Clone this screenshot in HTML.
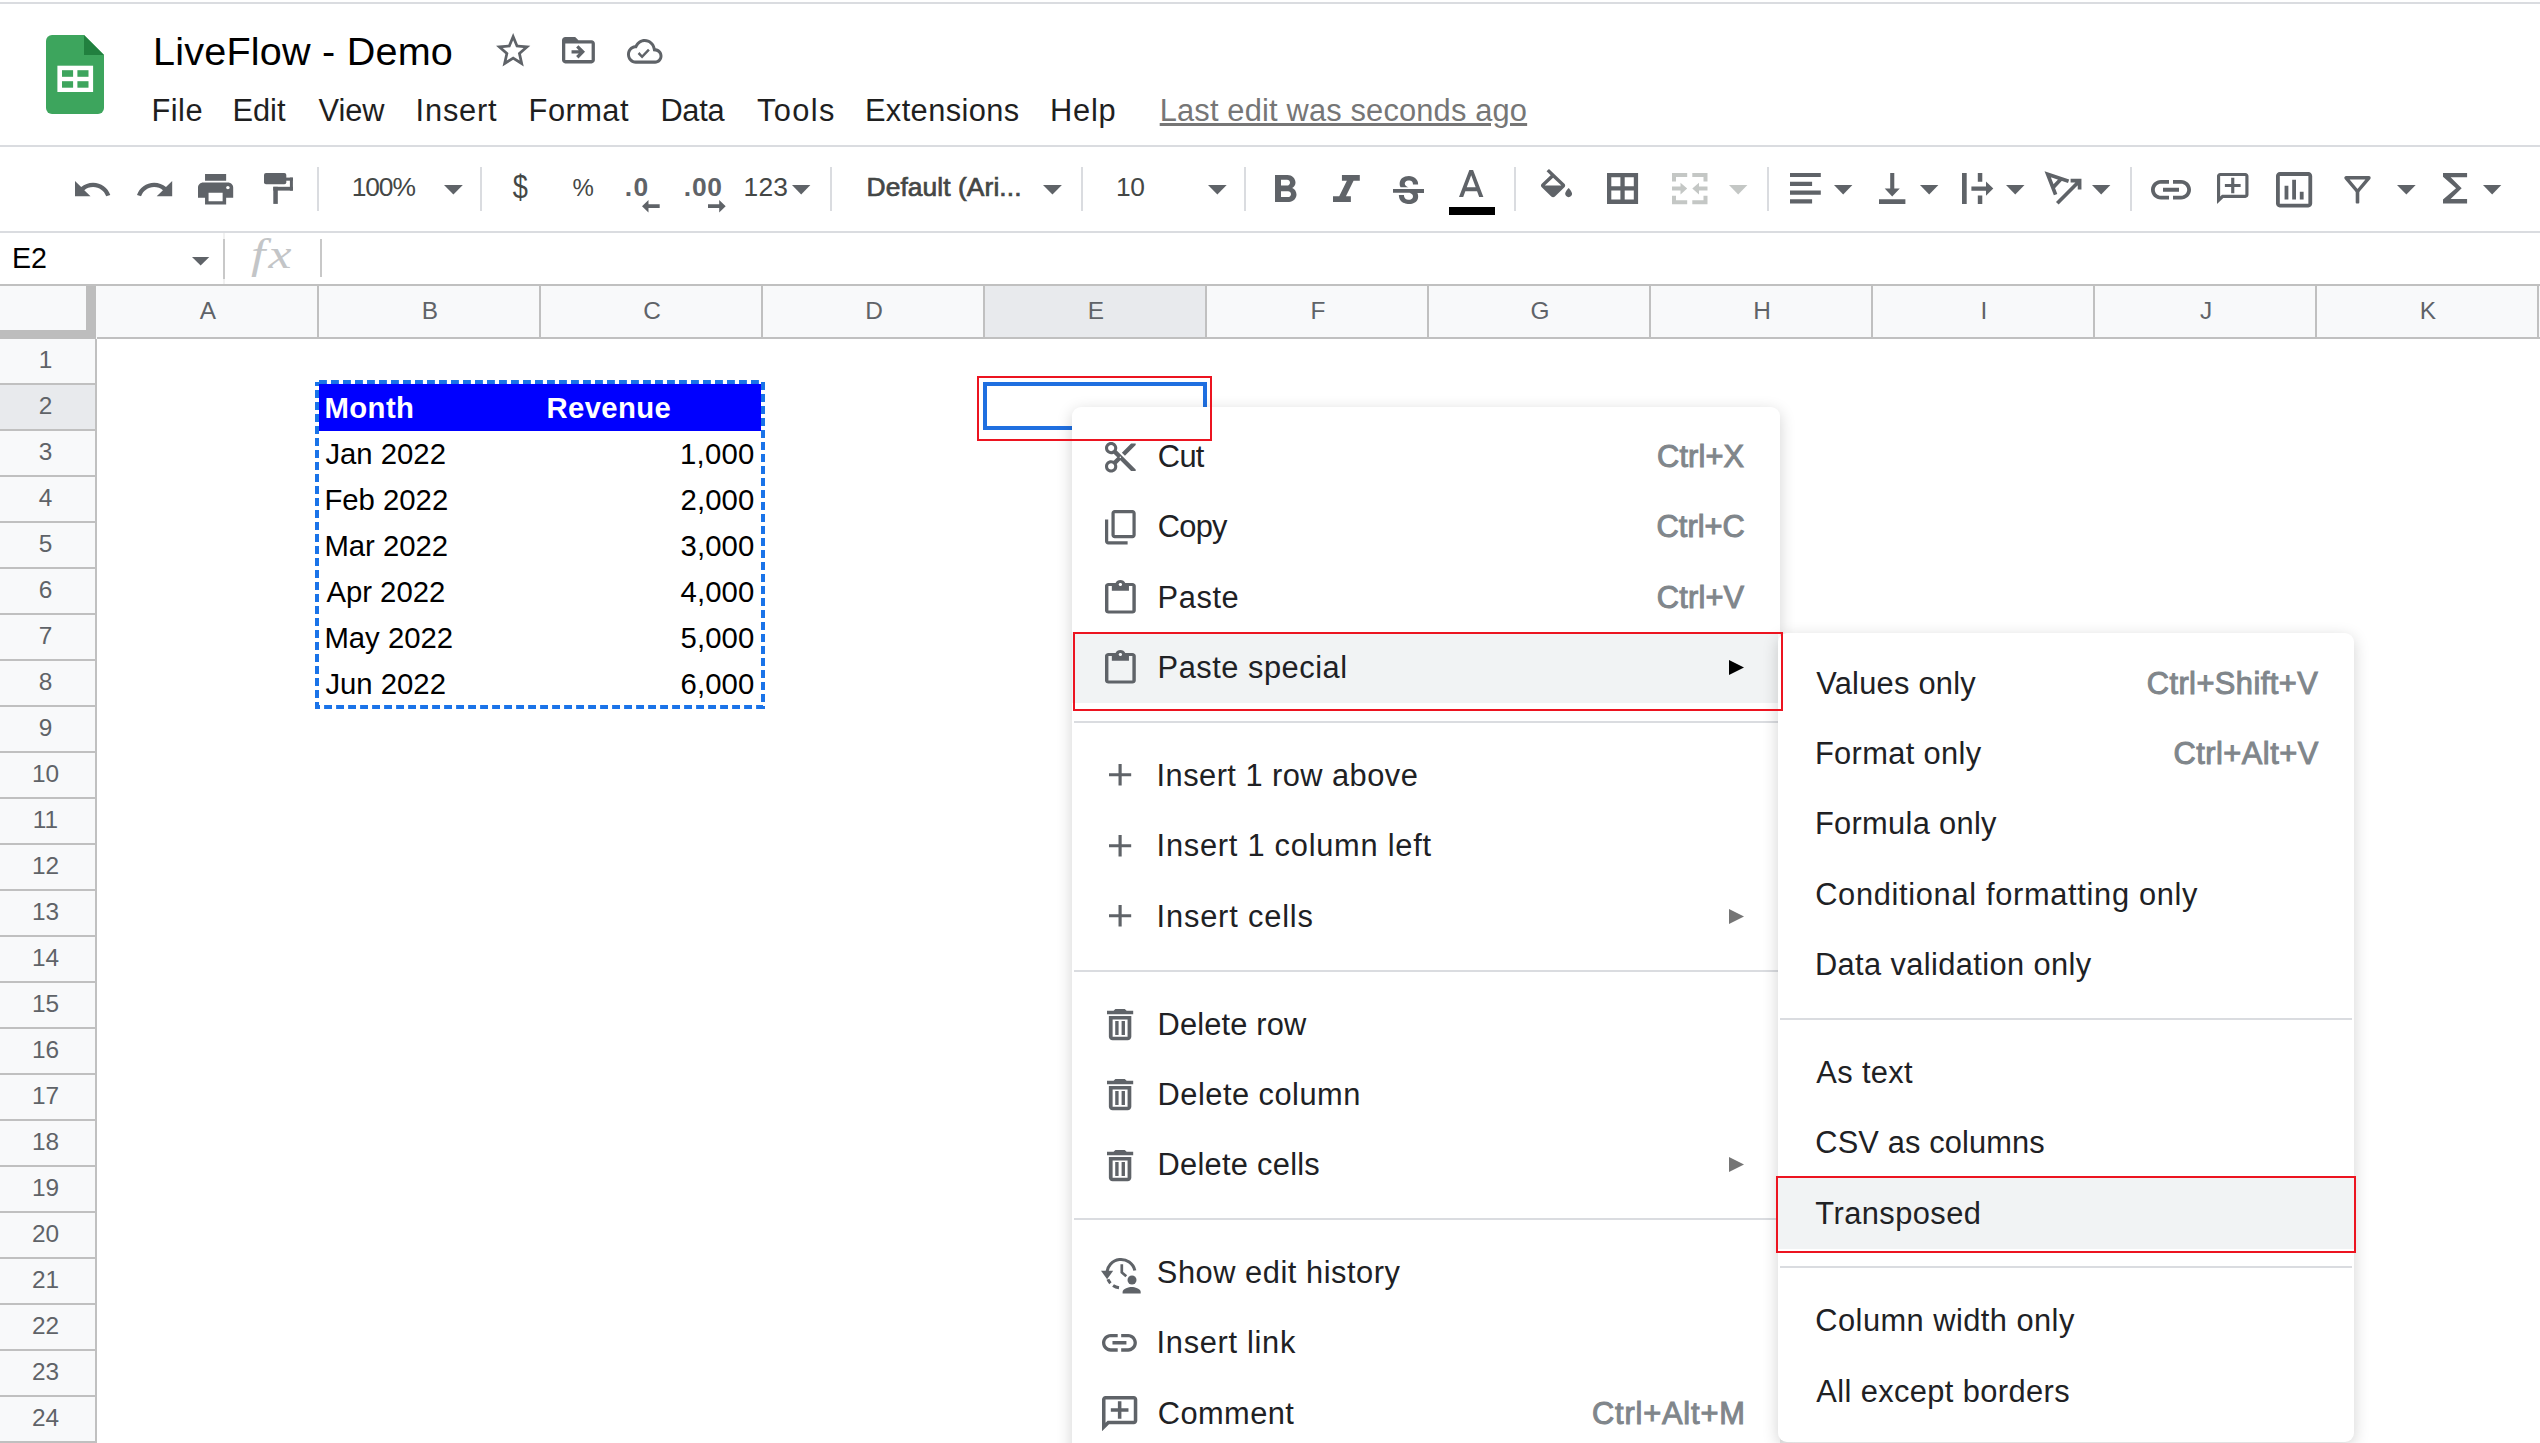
<!DOCTYPE html>
<html lang="en">
<head>
<meta charset="utf-8">
<title>LiveFlow - Demo</title>
<style>
*{box-sizing:border-box;margin:0;padding:0}
html,body{width:2540px;height:1443px;overflow:hidden;background:#fff}
body{position:relative;font-family:"Liberation Sans",sans-serif;color:#202124}
.abs{position:absolute}
.t{position:absolute;white-space:nowrap;line-height:1.15}
svg{position:absolute;overflow:visible}
#topline{left:0;top:2px;width:2540px;height:2px;background:#dadce0}
#hdrline{left:0;top:145px;width:2540px;height:2px;background:#dadce0}
#tbline{left:0;top:231px;width:2540px;height:2px;background:#dadce0}
#lastedit{color:#767676;text-decoration:underline;text-decoration-thickness:2.6px;text-underline-offset:1.800px}
.tsep{position:absolute;top:167px;width:2px;height:44px;background:#dadce0}
.tt{color:#444746}
.ti{color:#5f6368}
.tb{color:#444746;-webkit-text-stroke:0.7px #444746}
#colhdr{left:0;top:284px;width:2540px;height:55px;background:#f8f9fa;border-top:2px solid #c0c0c0;border-bottom:2px solid #c0c0c0}
.ch{position:absolute;top:286px;height:51px;width:222px;border-right:2px solid #c0c0c0;font-size:24.4px;color:#5f6368;text-align:center;line-height:50px;padding-left:2px}
.ch.sel,.rh.sel{background:#e8eaed}
#rowhdr{left:0;top:339px;width:97px;height:1104px;background:#f8f9fa;border-right:2px solid #c0c0c0}
.rh{position:absolute;left:0;width:95px;height:46px;border-bottom:2px solid #c0c0c0;font-size:24.4px;color:#5f6368;text-align:center;line-height:41.500px;padding-right:4px}
#corner{left:0;top:286px;width:97px;height:53px;background:#f8f9fa}
#cornerv{left:86px;top:286px;width:10px;height:53px;background:#bdbdbd}
#cornerh{left:0;top:330px;width:96px;height:9px;background:#bdbdbd}
.cell{position:absolute;font-size:29.3px;color:#000;line-height:46px;height:46px;white-space:nowrap}
.hb{color:#fff;font-weight:bold}
.num{text-align:right}
.menubox{position:absolute;background:#fff;border-radius:9px;box-shadow:0 4px 16px 0 rgba(0,0,0,.18)}
.mi{position:absolute;left:0;height:70.4px;width:100%}
.sc{color:#80868b;-webkit-text-stroke:1px #80868b}
.msep{position:absolute;left:0;width:100%;height:2px;background:#dadce0}
.hl{background:#f1f3f4}
.red{position:absolute;border:2px solid #ec1420}

</style>
</head>
<body>
<div class="abs" id="topline"></div>
<svg style="left:46.400px;top:35px" width="58" height="79" viewBox="0 0 58 79">
<path d="M6 0H38L58 20V73a6 6 0 0 1-6 6H6a6 6 0 0 1-6-6V6a6 6 0 0 1 6-6z" fill="#3da55d"/>
<path d="M38 0L58 20H38z" fill="#21803f"/>
<rect x="11.4" y="30.7" width="35.7" height="26.3" fill="#fff"/>
<rect x="16" y="35.2" width="11.1" height="6.6" fill="#3da55d"/><rect x="31.4" y="35.2" width="11.1" height="6.6" fill="#3da55d"/>
<rect x="16" y="46.2" width="11.1" height="6.5" fill="#3da55d"/><rect x="31.4" y="46.2" width="11.1" height="6.5" fill="#3da55d"/>
</svg>
<div class="t " id="title" style="left:153.0px;top:28.5px;font-size:39.6px;letter-spacing:0.21px;color:#000;">LiveFlow - Demo</div>
<svg style="left:495.6px;top:33.2px" width="34.3" height="33.4" viewBox="2.000 2.000 20.000 19.000" preserveAspectRatio="none"><path fill="#5f6368" d="M22 9.240l-7.190-.62L12 2 9.190 8.630 2 9.240l5.460 4.730L5.820 21 12 17.270 18.180 21l-1.630-7.030L22 9.240zM12 15.400l-3.760 2.270 1-4.280-3.320-2.880 4.380-.38L12 6.100l1.710 4.040 4.380.38-3.320 2.880 1 4.280L12 15.400z"/></svg>
<svg style="left:561.8px;top:36.6px" width="32.9" height="26.4" viewBox="2.000 4.000 20.000 16.000" preserveAspectRatio="none"><path fill="#5f6368" d="M20 6h-8l-2-2H4c-1.100 0-2 .9-2 2v12c0 1.100.9 2 2 2h16c1.100 0 2-.9 2-2V8c0-1.100-.9-2-2-2zm0 12H4V8h16v10zM12 17l-1.410-1.410L12.170 14H7.800v-2h4.370l-1.580-1.590L12 9l4 4z"/></svg>
<svg style="left:627.2px;top:38.6px" width="35.5" height="24.7" viewBox="0.000 4.000 24.000 16.000" preserveAspectRatio="none"><path fill="#5f6368" d="M19.350 10.040C18.670 6.590 15.640 4 12 4 9.110 4 6.600 5.640 5.350 8.040 2.340 8.360 0 10.910 0 14c0 3.310 2.690 6 6 6h13c2.760 0 5-2.240 5-5 0-2.640-2.050-4.780-4.650-4.960zM19 18H6c-2.210 0-4-1.790-4-4 0-2.050 1.530-3.760 3.560-3.970l1.070-.11.5-.95C8.080 7.140 9.940 6 12 6c2.620 0 4.880 1.860 5.390 4.430l.3 1.500 1.530.11c1.560.1 2.780 1.410 2.780 2.960 0 1.650-1.350 3-3 3zM10.200 14.300l-1.800-1.800-1.200 1.200 3 3 5.200-5.200-1.200-1.200z"/></svg>
<div class="t " id="m1" style="left:151.6px;top:93.1px;font-size:30.8px;letter-spacing:0.43px;color:#1f1f1f;">File</div>
<div class="t " id="m2" style="left:232.4px;top:93.1px;font-size:30.8px;color:#1f1f1f;">Edit</div>
<div class="t " id="m3" style="left:318.6px;top:93.1px;font-size:30.8px;letter-spacing:-0.10px;color:#1f1f1f;">View</div>
<div class="t " id="m4" style="left:415.6px;top:93.1px;font-size:30.8px;letter-spacing:0.80px;color:#1f1f1f;">Insert</div>
<div class="t " id="m5" style="left:528.6px;top:93.1px;font-size:30.8px;letter-spacing:0.48px;color:#1f1f1f;">Format</div>
<div class="t " id="m6" style="left:660.4px;top:93.1px;font-size:30.8px;letter-spacing:-0.30px;color:#1f1f1f;">Data</div>
<div class="t " id="m7" style="left:757.0px;top:93.1px;font-size:30.8px;letter-spacing:1.40px;color:#1f1f1f;">Tools</div>
<div class="t " id="m8" style="left:864.9px;top:93.1px;font-size:30.8px;letter-spacing:0.41px;color:#1f1f1f;">Extensions</div>
<div class="t " id="m9" style="left:1050.0px;top:93.1px;font-size:30.8px;letter-spacing:0.80px;color:#1f1f1f;">Help</div>
<div class="t " id="lastedit" style="left:1159.7px;top:92.9px;font-size:30.8px;letter-spacing:0.18px;">Last edit was seconds ago</div>
<div class="abs" id="hdrline"></div>
<svg style="left:74.9px;top:180.9px" width="35.3" height="15.3" viewBox="2.000 7.000 20.470 9.000" preserveAspectRatio="none"><path fill="#5f6368" d="M12.5 8c-2.65 0-5.05.99-6.9 2.6L2 7v9h9l-3.62-3.62c1.39-1.16 3.16-1.88 5.12-1.88 3.54 0 6.55 2.31 7.6 5.5l2.37-.78C21.08 11.03 17.15 8 12.5 8z"/></svg>
<svg style="left:137.0px;top:180.9px" width="35.2" height="15.3" viewBox="1.540 7.000 20.460 9.000" preserveAspectRatio="none"><path fill="#5f6368" d="M18.4 10.6C16.55 8.99 14.15 8 11.5 8c-4.65 0-8.58 3.03-9.96 7.22L3.9 16c1.05-3.19 4.05-5.5 7.6-5.5 1.95 0 3.73.72 5.12 1.88L13 16h9V7l-3.6 3.6z"/></svg>
<svg style="left:198.1px;top:174.0px" width="35.2" height="30.6" viewBox="2.000 3.000 20.000 18.000" preserveAspectRatio="none"><path fill="#5f6368" d="M19 8H5c-1.66 0-3 1.34-3 3v6h4v4h12v-4h4v-6c0-1.66-1.34-3-3-3zm-3 11H8v-5h8v5zm3-7c-.55 0-1-.45-1-1s.45-1 1-1 1 .45 1 1-.45 1-1 1zm-1-9H6v4h12V3z"/></svg>
<svg style="left:264px;top:173.200px" width="29" height="31" viewBox="0 0 29 31"><g fill="#5f6368"><rect x="0" y="0" width="22.300" height="11.300" rx="2"/><rect x="22" y="4.600" width="6.900" height="3.100"/><rect x="25.900" y="4.600" width="3" height="13"/><rect x="9.300" y="13.800" width="19.600" height="3.800"/><rect x="9.300" y="13.800" width="4.500" height="17.100"/></g></svg>
<div class="tsep" style="left:317.4px"></div>
<div class="tsep" style="left:480.2px"></div>
<div class="tsep" style="left:830.2px"></div>
<div class="tsep" style="left:1081.2px"></div>
<div class="tsep" style="left:1244.2px"></div>
<div class="tsep" style="left:1514.2px"></div>
<div class="tsep" style="left:1767px"></div>
<div class="tsep" style="left:2129.6px"></div>
<div class="t tt" id="zoom" style="left:351.7px;top:172.0px;font-size:26.4px;letter-spacing:-1.10px;">100%</div>
<svg style="left:444.1px;top:185.0px" width="18.8" height="9.5" viewBox="0 0 18.8 9.5"><path fill="#5f6368" d="M0 0H18.8L9.40 9.5z"/></svg>
<div class="t tt" id="dollar" style="left:513.3px;top:172.0px;font-size:26.4px;transform:scale(1.03,1.23);transform-origin:center 52%;">$</div>
<div class="t tt" id="pct" style="left:572.4px;top:174.2px;font-size:24px;">%</div>
<div class="t tt ti" id="dec0" style="left:624.8px;top:172.3px;font-size:26.4px;letter-spacing:1.40px;font-weight:700;">.0</div>
<svg style="left:642.4px;top:199.7px" width="17.7" height="12.4" viewBox="0 0 17.7 12.4"><path fill="#5f6368" d="M0 6.200L6.500 0V4.300H17.700V8.100H6.500V12.400z"/></svg>
<div class="t tt ti" id="dec00" style="left:683.8px;top:172.3px;font-size:26.4px;letter-spacing:0.75px;font-weight:700;">.00</div>
<svg style="left:708px;top:199.700px" width="17.7" height="12.4" viewBox="0 0 17.7 12.4"><path fill="#5f6368" d="M17.700 6.200L11.200 0V4.300H0V8.100H11.200V12.400z"/></svg>
<div class="t tt" id="n123" style="left:743.5px;top:172.0px;font-size:26.4px;letter-spacing:0.20px;">123</div>
<svg style="left:792.4px;top:185.0px" width="18.4" height="9.5" viewBox="0 0 18.4 9.5"><path fill="#5f6368" d="M0 0H18.4L9.20 9.5z"/></svg>
<div class="t tt tb" id="fontname" style="left:866.5px;top:172.2px;font-size:26.4px;letter-spacing:0.07px;">Default (Ari...</div>
<svg style="left:1043.1px;top:185.0px" width="18.9" height="9.5" viewBox="0 0 18.9 9.5"><path fill="#5f6368" d="M0 0H18.9L9.45 9.5z"/></svg>
<div class="t tt" id="fsize" style="left:1115.9px;top:172.0px;font-size:26.4px;letter-spacing:-0.30px;">10</div>
<svg style="left:1207.5px;top:185.0px" width="18.7" height="9.5" viewBox="0 0 18.7 9.5"><path fill="#5f6368" d="M0 0H18.7L9.35 9.5z"/></svg>
<svg style="left:1274.5px;top:175.2px" width="21.5" height="26.9" viewBox="7.000 4.000 10.750 14.000" preserveAspectRatio="none"><path fill="#5f6368" d="M15.6 10.79c.97-.67 1.65-1.77 1.65-2.79 0-2.26-1.75-4-4-4H7v14h7.04c2.09 0 3.71-1.7 3.71-3.79 0-1.52-.86-2.82-2.15-3.42zM10 6.5h3c.83 0 1.5.67 1.5 1.5s-.67 1.5-1.5 1.5h-3v-3zm3.5 9H10v-3h3.5c.83 0 1.5.67 1.5 1.5s-.67 1.5-1.5 1.5z"/></svg>
<svg style="left:1333.2px;top:175.2px" width="26.8" height="26.9" viewBox="6.000 4.000 12.000 14.000" preserveAspectRatio="none"><path fill="#5f6368" d="M10 4v3h2.21l-3.42 8H6v3h8v-3h-2.21l3.42-8H18V4z"/></svg>
<svg style="left:1393.0px;top:176.2px" width="31.0" height="28.1" viewBox="3.000 3.000 18.000 15.010" preserveAspectRatio="none"><path fill="#5f6368" d="M7.24 8.75c-.26-.48-.39-1.03-.39-1.67 0-.61.13-1.16.4-1.67.26-.5.63-.93 1.11-1.29.48-.35 1.05-.63 1.7-.83.66-.19 1.39-.29 2.18-.29.81 0 1.54.11 2.21.34.66.22 1.23.54 1.69.94.47.4.83.88 1.08 1.43.25.55.38 1.15.38 1.81h-3.01c0-.31-.05-.59-.15-.85-.09-.27-.24-.49-.44-.68-.2-.19-.45-.33-.75-.44-.3-.1-.66-.16-1.06-.16-.39 0-.74.04-1.03.13-.29.09-.53.21-.72.36-.19.16-.34.34-.44.55-.1.21-.15.43-.15.66 0 .48.25.88.74 1.21.38.25.77.48 1.41.7H7.39c-.05-.08-.11-.17-.15-.25zM21 12v-2H3v2h9.62c.18.07.4.14.55.2.37.17.66.34.87.51.21.17.35.36.43.57.07.2.11.43.11.69 0 .23-.05.45-.14.66-.09.2-.23.38-.42.53-.19.15-.42.26-.71.35-.29.08-.63.13-1.01.13-.43 0-.83-.04-1.18-.13s-.66-.23-.91-.42c-.25-.19-.45-.44-.59-.75-.14-.31-.25-.76-.25-1.21H6.4c0 .55.08 1.13.24 1.58.16.45.37.85.65 1.21.28.35.6.66.98.92.37.26.78.48 1.22.65.44.17.9.3 1.38.39.48.08.96.13 1.44.13.8 0 1.53-.09 2.18-.28s1.21-.45 1.67-.79c.46-.34.82-.77 1.07-1.27s.38-1.07.38-1.71c0-.6-.1-1.14-.31-1.61-.05-.11-.11-.23-.17-.33H21z"/></svg>
<svg style="left:1458.7px;top:170.2px" width="24.4" height="27.0" viewBox="5.500 3.000 12.990 14.000" preserveAspectRatio="none"><path fill="#5f6368" d="M11 3L5.5 17h2.25l1.12-3h6.25l1.12 3h2.25L13 3h-2zm-1.38 9L12 5.67 14.38 12H9.62z"/></svg>
<div class="abs" style="left:1449px;top:207px;width:46px;height:8px;background:#000"></div>
<svg style="left:1541.0px;top:169.0px" width="31.1" height="28.2" viewBox="2.997 0.000 18.003 17.000" preserveAspectRatio="none"><path fill="#5f6368" d="M16.56 8.94L7.62 0 6.21 1.41l2.38 2.38-5.15 5.15c-.59.59-.59 1.54 0 2.12l5.5 5.5c.29.29.68.44 1.06.44s.77-.15 1.06-.44l5.5-5.5c.59-.58.59-1.53 0-2.12zM5.21 10L10 5.21 14.79 10H5.21zM19 11.5s-2 2.17-2 3.5c0 1.1.9 2 2 2s2-.9 2-2c0-1.33-2-3.5-2-3.5z"/></svg>
<svg style="left:1607.1px;top:172.9px" width="31.1" height="30.9" viewBox="0 0 31.1 30.9"><path fill="#5f6368" fill-rule="evenodd" d="M0 0H31.1V30.9H0zM4.300 4.300V13.300H13.400V4.300zM17.700 4.300V13.300H26.800V4.300zM4.300 17.600V26.600H13.400V17.600zM17.700 17.600V26.600H26.800V17.600z"/></svg>
<svg style="left:1672px;top:173.200px" width="35.500" height="31.200" viewBox="0 0 35.500 31.200"><path fill="#c4c7c5" d="M0 0H15.200V4H4V8.500H0zM20.300 0H35.500V8.500H31.500V4H20.300zM0 22.700H4V27.200H15.200V31.200H0zM31.500 22.700H35.500V31.200H20.300V27.200H31.500zM0 13.600H8.500V9.800L15.200 15.600L8.500 21.400V17.600H0zM35.500 13.600V17.600H27V21.400L20.300 15.600L27 9.800V13.600z"/></svg>
<svg style="left:1728.6px;top:185.0px" width="18.4" height="9.5" viewBox="0 0 18.4 9.5"><path fill="#c4c7c5" d="M0 0H18.4L9.20 9.5z"/></svg>
<svg style="left:1790.4px;top:173.2px" width="31" height="30.500" viewBox="0 0 31 30.500"><path fill="#5f6368" d="M0 0H30.800V4.100H0zM0 8.800H22.100V12.900H0zM0 17.600H30.800V21.700H0zM0 26.300H22.100V30.400H0z"/></svg>
<svg style="left:1834.2px;top:185.0px" width="18.4" height="9.5" viewBox="0 0 18.4 9.5"><path fill="#5f6368" d="M0 0H18.4L9.20 9.5z"/></svg>
<svg style="left:1878.8px;top:172.600px" width="26.400" height="31" viewBox="0 0 26.400 31"><path fill="#5f6368" d="M11.200 0H15.300V15.400H20.800L13.200 23.400L5.700 15.400H11.200zM0 26.300H26.400V30.900H0z"/></svg>
<svg style="left:1920.0px;top:185.0px" width="18.4" height="9.5" viewBox="0 0 18.4 9.5"><path fill="#5f6368" d="M0 0H18.4L9.20 9.5z"/></svg>
<svg style="left:1961.700px;top:172.700px" width="31.300" height="31.200" viewBox="0 0 31.300 31.200"><path fill="#5f6368" d="M0 0H4.700V31.100H0zM15.800 0H20.300V8.700H15.800zM15.800 22.600H20.300V31.100H15.800zM9.400 13.500H24V8.500L31.300 15.600L24 22.700V17.700H9.400z"/></svg>
<svg style="left:2006.0px;top:185.0px" width="18.5" height="9.5" viewBox="0 0 18.5 9.5"><path fill="#5f6368" d="M0 0H18.5L9.25 9.5z"/></svg>
<svg style="left:2046.400px;top:172.600px" width="36" height="32" viewBox="0 0 36 32"><g fill="none" stroke="#5f6368" stroke-width="3.700"><path d="M22.600 8.200L1.700 1.200L9.600 21.600M15.300 5.800L6.900 14.600" stroke-linejoin="miter"/><path d="M11.300 30.200L32.200 9.200M24.600 7.600H33.600V16.600"/></g></svg>
<svg style="left:2091.8px;top:185.0px" width="18.4" height="9.5" viewBox="0 0 18.4 9.5"><path fill="#5f6368" d="M0 0H18.4L9.20 9.5z"/></svg>
<svg style="left:2151.0px;top:179.7px" width="40.0" height="19.5" viewBox="2.000 7.000 20.000 10.000" preserveAspectRatio="none"><path fill="#5f6368" d="M3.9 12c0-1.71 1.39-3.1 3.1-3.1h4V7H7c-2.76 0-5 2.24-5 5s2.240 5 5 5h4v-1.900H7c-1.710 0-3.100-1.390-3.100-3.100zM8 13h8v-2H8v2zm9-6h-4v1.900h4c1.710 0 3.100 1.390 3.100 3.100s-1.390 3.100-3.100 3.100h-4V17h4c2.760 0 5-2.240 5-5s-2.240-5-5-5z"/></svg>
<svg style="left:2216.9px;top:173.4px" width="31.5" height="31.1" viewBox="2.000 2.000 20.000 20.000" preserveAspectRatio="none"><path fill="#5f6368" transform="translate(24.000 0) scale(-1 1)" d="M22 4c0-1.100-.9-2-2-2H4c-1.100 0-2 .9-2 2v12c0 1.100.9 2 2 2h14l4 4V4zm-2 13.170L18.830 16H4V4h16v13.170zM13 5h-2v4H7v2h4v4h2v-4h4V9h-4z"/></svg>
<svg style="left:2276.0px;top:171.6px" width="36.2" height="35.4" viewBox="2.500 3.000 19.000 18.000" preserveAspectRatio="none"><path fill="#5f6368" d="M9 17H7v-7h2v7zm4 0h-2V7h2v10zm4 0h-2v-4h2v4zm2.500 2.100h-15V5h15v14.100zm0-16.100h-15c-1.100 0-2 .9-2 2v14c0 1.100.9 2 2 2h15c1.100 0 2-.9 2-2V5c0-1.100-.9-2-2-2z"/></svg>
<svg style="left:2344.100px;top:176.200px" width="27" height="27.600" viewBox="0 0 27 27.600"><path fill="none" stroke="#5f6368" stroke-width="3.400" stroke-linejoin="round" d="M2 1.800H25L13.500 15.500z"/><rect x="11.700" y="14" width="3.600" height="13.400" rx="1" fill="#5f6368"/></svg>
<svg style="left:2396.6px;top:185.0px" width="18.7" height="9.5" viewBox="0 0 18.7 9.5"><path fill="#5f6368" d="M0 0H18.7L9.35 9.5z"/></svg>
<svg style="left:2442.600px;top:173.400px" width="24.100" height="30.400" viewBox="6 4 12 16" preserveAspectRatio="none"><path fill="#5f6368" d="M18 4H6v2l6.500 6L6 18v2h12v-2.300H9.800L15.300 12 9.800 6.300H18z"/></svg>
<svg style="left:2482.7px;top:185.0px" width="18.3" height="9.5" viewBox="0 0 18.3 9.5"><path fill="#5f6368" d="M0 0H18.3L9.15 9.5z"/></svg>
<div class="abs" id="tbline"></div>
<div class="t " id="namebox" style="left:12.0px;top:241.6px;font-size:28.6px;color:#000;">E2</div>
<svg style="left:191.7px;top:256.5px" width="17.3" height="8.5" viewBox="0 0 17.3 8.5"><path fill="#5f6368" d="M0 0H17.3L8.65 8.5z"/></svg>
<div class="abs" style="left:223px;top:233px;width:2px;height:51px;background:#f1f1f1"></div><div class="abs" style="left:223px;top:239px;width:2px;height:40px;background:#c8c8c8"></div>
<div class="t " id="fx" style="left:251.0px;top:229.8px;font-size:42px;letter-spacing:2.50px;color:#c3c5c7;font-style:italic;font-family:&quot;Liberation Serif&quot;,serif;transform:scaleX(1.23);transform-origin:left center;">fx</div>
<div class="abs" style="left:320px;top:239px;width:2px;height:38px;background:#c8c8c8"></div>
<div class="abs" id="colhdr"></div>
<div class="ch" style="left:97px">A</div>
<div class="ch" style="left:319px">B</div>
<div class="ch" style="left:541px">C</div>
<div class="ch" style="left:763px">D</div>
<div class="ch sel" style="left:985px">E</div>
<div class="ch" style="left:1207px">F</div>
<div class="ch" style="left:1429px">G</div>
<div class="ch" style="left:1651px">H</div>
<div class="ch" style="left:1873px">I</div>
<div class="ch" style="left:2095px">J</div>
<div class="ch" style="left:2317px">K</div>
<div class="abs" id="rowhdr"></div>
<div class="rh" style="top:339px">1</div>
<div class="rh sel" style="top:385px">2</div>
<div class="rh" style="top:431px">3</div>
<div class="rh" style="top:477px">4</div>
<div class="rh" style="top:523px">5</div>
<div class="rh" style="top:569px">6</div>
<div class="rh" style="top:615px">7</div>
<div class="rh" style="top:661px">8</div>
<div class="rh" style="top:707px">9</div>
<div class="rh" style="top:753px">10</div>
<div class="rh" style="top:799px">11</div>
<div class="rh" style="top:845px">12</div>
<div class="rh" style="top:891px">13</div>
<div class="rh" style="top:937px">14</div>
<div class="rh" style="top:983px">15</div>
<div class="rh" style="top:1029px">16</div>
<div class="rh" style="top:1075px">17</div>
<div class="rh" style="top:1121px">18</div>
<div class="rh" style="top:1167px">19</div>
<div class="rh" style="top:1213px">20</div>
<div class="rh" style="top:1259px">21</div>
<div class="rh" style="top:1305px">22</div>
<div class="rh" style="top:1351px">23</div>
<div class="rh" style="top:1397px">24</div>
<div class="abs" id="corner"></div><div class="abs" id="cornerv"></div><div class="abs" id="cornerh"></div>
<div class="abs" style="left:319px;top:384px;width:443px;height:47px;background:#0000ff"></div>
<div class="t " id="c_month" style="left:324.4px;top:391.0px;font-size:29.3px;letter-spacing:0.43px;font-weight:700;color:#fff;">Month</div>
<div class="t " id="c_rev" style="left:546.5px;top:391.0px;font-size:29.3px;letter-spacing:0.37px;font-weight:700;color:#fff;">Revenue</div>
<div class="t " id="c_m0" style="left:325.4px;top:437.0px;font-size:29.3px;color:#000;">Jan 2022</div>
<div class="t " id="c_v0" style="left:680.1px;top:437.0px;font-size:29.3px;letter-spacing:0.22px;color:#000;">1,000</div>
<div class="t " id="c_m1" style="left:324.4px;top:483.0px;font-size:29.3px;color:#000;">Feb 2022</div>
<div class="t " id="c_v1" style="left:680.5px;top:483.0px;font-size:29.3px;letter-spacing:0.12px;color:#000;">2,000</div>
<div class="t " id="c_m2" style="left:324.4px;top:529.0px;font-size:29.3px;color:#000;">Mar 2022</div>
<div class="t " id="c_v2" style="left:680.5px;top:529.0px;font-size:29.3px;letter-spacing:0.12px;color:#000;">3,000</div>
<div class="t " id="c_m3" style="left:326.4px;top:575.0px;font-size:29.3px;color:#000;">Apr 2022</div>
<div class="t " id="c_v3" style="left:680.5px;top:575.0px;font-size:29.3px;letter-spacing:0.12px;color:#000;">4,000</div>
<div class="t " id="c_m4" style="left:324.4px;top:621.0px;font-size:29.3px;color:#000;">May 2022</div>
<div class="t " id="c_v4" style="left:680.5px;top:621.0px;font-size:29.3px;letter-spacing:0.12px;color:#000;">5,000</div>
<div class="t " id="c_m5" style="left:325.4px;top:667.0px;font-size:29.3px;color:#000;">Jun 2022</div>
<div class="t " id="c_v5" style="left:680.5px;top:667.0px;font-size:29.3px;letter-spacing:0.12px;color:#000;">6,000</div>
<svg style="left:315px;top:380px" width="450" height="329" viewBox="0 0 450 329"><rect x="2" y="2" width="446" height="325" fill="none" stroke="#fff" stroke-width="4"/><rect x="2" y="2" width="446" height="325" fill="none" stroke="#1a73e8" stroke-width="4" stroke-dasharray="7.900 4.100" stroke-dashoffset="-2"/></svg>
<div class="abs" style="left:983px;top:382px;width:224px;height:48px;border:4px solid #1f6fe0"></div>
<div class="menubox" id="menu1" style="left:1072px;top:407px;width:708px;height:1100px">
<div class="mi hl" style="top:224.8px;width:706px;height:71.200px"></div>
<div class="msep" style="top:314px;left:2px;width:704px"></div>
<div class="msep" style="top:563px;left:2px;width:704px"></div>
<div class="msep" style="top:811px;left:2px;width:704px"></div>
</div>
<div class="t " id="mi0" style="left:1157.8px;top:438.9px;font-size:30.8px;letter-spacing:-0.65px;color:#202124;">Cut</div>
<div class="t sc" id="mi0s" style="left:1657.0px;top:438.9px;font-size:30.8px;letter-spacing:0.14px;">Ctrl+X</div>
<div class="t " id="mi1" style="left:1157.8px;top:509.4px;font-size:30.8px;letter-spacing:-0.77px;color:#202124;">Copy</div>
<div class="t sc" id="mi1s" style="left:1656.5px;top:509.4px;font-size:30.8px;letter-spacing:0.04px;">Ctrl+C</div>
<div class="t " id="mi2" style="left:1157.6px;top:579.9px;font-size:30.8px;letter-spacing:0.58px;color:#202124;">Paste</div>
<div class="t sc" id="mi2s" style="left:1656.8px;top:579.9px;font-size:30.8px;letter-spacing:0.18px;">Ctrl+V</div>
<div class="t " id="mi3" style="left:1157.6px;top:649.9px;font-size:30.8px;letter-spacing:0.52px;color:#202124;">Paste special</div>
<div class="t " id="mi4" style="left:1156.6px;top:757.9px;font-size:30.8px;letter-spacing:0.46px;color:#202124;">Insert 1 row above</div>
<div class="t " id="mi5" style="left:1156.6px;top:828.4px;font-size:30.8px;letter-spacing:0.75px;color:#202124;">Insert 1 column left</div>
<div class="t " id="mi6" style="left:1156.6px;top:898.9px;font-size:30.8px;letter-spacing:0.83px;color:#202124;">Insert cells</div>
<div class="t " id="mi7" style="left:1157.6px;top:1006.9px;font-size:30.8px;letter-spacing:0.17px;color:#202124;">Delete row</div>
<div class="t " id="mi8" style="left:1157.6px;top:1076.9px;font-size:30.8px;letter-spacing:0.49px;color:#202124;">Delete column</div>
<div class="t " id="mi9" style="left:1157.6px;top:1147.4px;font-size:30.8px;letter-spacing:0.27px;color:#202124;">Delete cells</div>
<div class="t " id="mi10" style="left:1156.8px;top:1254.9px;font-size:30.8px;letter-spacing:0.54px;color:#202124;">Show edit history</div>
<div class="t " id="mi11" style="left:1156.6px;top:1325.4px;font-size:30.8px;letter-spacing:0.69px;color:#202124;">Insert link</div>
<div class="t " id="mi12" style="left:1157.8px;top:1395.9px;font-size:30.8px;letter-spacing:0.43px;color:#202124;">Comment</div>
<div class="t sc" id="mi12s" style="left:1592.0px;top:1395.9px;font-size:30.8px;letter-spacing:0.82px;">Ctrl+Alt+M</div>
<svg style="left:1104.6px;top:442.2px" width="30.7" height="30.5" viewBox="2.000 2.000 20.000 20.000" preserveAspectRatio="none"><path fill="#5f6368" d="M9.640 7.640c.23-.5.36-1.050.36-1.640 0-2.210-1.790-4-4-4S2 3.790 2 6s1.790 4 4 4c.59 0 1.140-.13 1.640-.36L10 12l-2.360 2.360C7.140 14.130 6.590 14 6 14c-2.210 0-4 1.790-4 4s1.790 4 4 4 4-1.790 4-4c0-.59-.13-1.140-.36-1.640L12 14l7 7h3v-1L9.640 7.640zM6 8c-1.100 0-2-.89-2-2s.9-2 2-2 2 .89 2 2-.9 2-2 2zm0 12c-1.100 0-2-.89-2-2s.9-2 2-2 2 .89 2 2-.9 2-2 2zm6-7.500c-.28 0-.5-.22-.5-.5s.22-.5.5-.5.5.22.5.5-.22.5-.5.5zM19 3l-6 6 2 2 7-7V3z"/></svg>
<svg style="left:1104.6px;top:510.0px" width="30.7" height="34.5" viewBox="2.000 1.000 19.000 22.000" preserveAspectRatio="none"><path fill="#5f6368" transform="translate(0 24.000) scale(1 -1)" d="M16 1H4c-1.100 0-2 .9-2 2v14h2V3h12V1zm3 4H8c-1.100 0-2 .9-2 2v14c0 1.100.9 2 2 2h11c1.100 0 2-.9 2-2V7c0-1.100-.9-2-2-2zm0 16H8V7h11v14z"/></svg>
<svg style="left:1105.0px;top:579.7px" width="30.8" height="33.6" viewBox="3.000 0.000 18.000 22.000" preserveAspectRatio="none"><path fill="#5f6368" d="M19 2h-4.180C14.400.84 13.300 0 12 0c-1.300 0-2.400.84-2.820 2H5c-1.100 0-2 .9-2 2v16c0 1.100.9 2 2 2h14c1.100 0 2-.9 2-2V4c0-1.100-.9-2-2-2zm-7 0c.55 0 1 .45 1 1s-.45 1-1 1-1-.45-1-1 .45-1 1-1zm7 18H5V4h2v3h10V4h2v16z"/></svg>
<svg style="left:1105.0px;top:649.7px" width="30.8" height="33.6" viewBox="3.000 0.000 18.000 22.000" preserveAspectRatio="none"><path fill="#5f6368" d="M19 2h-4.180C14.400.84 13.300 0 12 0c-1.300 0-2.400.84-2.820 2H5c-1.100 0-2 .9-2 2v16c0 1.100.9 2 2 2h14c1.100 0 2-.9 2-2V4c0-1.100-.9-2-2-2zm-7 0c.55 0 1 .45 1 1s-.45 1-1 1-1-.45-1-1 .45-1 1-1zm7 18H5V4h2v3h10V4h2v16z"/></svg>
<svg style="left:1729.0px;top:659.5px" width="15.0" height="15.0" viewBox="0 0 15.0 15.0"><path fill="#000" d="M0 0L15.0 7.50L0 15.0z"/></svg>
<svg style="left:1108.7px;top:764.3px" width="22.2" height="21.5" viewBox="5.000 5.000 14.000 14.000" preserveAspectRatio="none"><path fill="#5f6368" d="M19 13h-6v6h-2v-6H5v-2h6V5h2v6h6v2z"/></svg>
<svg style="left:1108.7px;top:834.8px" width="22.2" height="21.5" viewBox="5.000 5.000 14.000 14.000" preserveAspectRatio="none"><path fill="#5f6368" d="M19 13h-6v6h-2v-6H5v-2h6V5h2v6h6v2z"/></svg>
<svg style="left:1108.7px;top:905.3px" width="22.2" height="21.5" viewBox="5.000 5.000 14.000 14.000" preserveAspectRatio="none"><path fill="#5f6368" d="M19 13h-6v6h-2v-6H5v-2h6V5h2v6h6v2z"/></svg>
<svg style="left:1729.0px;top:908.5px" width="15.0" height="15.0" viewBox="0 0 15.0 15.0"><path fill="#757575" d="M0 0L15.0 7.50L0 15.0z"/></svg>
<svg style="left:1106.8px;top:1009.3px" width="26.2" height="31.2" viewBox="5.000 3.000 14.000 18.000" preserveAspectRatio="none"><path fill="#5f6368" d="M16 9v10H8V9h8m-1.500-6h-5l-1 1H5v2h14V4h-3.500l-1-1zM18 7H6v12c0 1.100.9 2 2 2h8c1.100 0 2-.9 2-2V7zM9.400 9.900h1.800v8.100H9.400zM12.800 9.900h1.800v8.100h-1.800z"/></svg>
<svg style="left:1106.8px;top:1079.3px" width="26.2" height="31.2" viewBox="5.000 3.000 14.000 18.000" preserveAspectRatio="none"><path fill="#5f6368" d="M16 9v10H8V9h8m-1.500-6h-5l-1 1H5v2h14V4h-3.500l-1-1zM18 7H6v12c0 1.100.9 2 2 2h8c1.100 0 2-.9 2-2V7zM9.400 9.900h1.800v8.100H9.400zM12.800 9.900h1.800v8.100h-1.800z"/></svg>
<svg style="left:1106.8px;top:1149.8px" width="26.2" height="31.2" viewBox="5.000 3.000 14.000 18.000" preserveAspectRatio="none"><path fill="#5f6368" d="M16 9v10H8V9h8m-1.500-6h-5l-1 1H5v2h14V4h-3.500l-1-1zM18 7H6v12c0 1.100.9 2 2 2h8c1.100 0 2-.9 2-2V7zM9.400 9.900h1.800v8.100H9.400zM12.800 9.900h1.800v8.100h-1.800z"/></svg>
<svg style="left:1729.0px;top:1157.0px" width="15.0" height="15.0" viewBox="0 0 15.0 15.0"><path fill="#757575" d="M0 0L15.0 7.50L0 15.0z"/></svg>
<svg style="left:1100.700px;top:1257.600px" width="39.700" height="35.400" viewBox="0 0 39.700 35.400"><g fill="none" stroke="#5f6368" stroke-width="3.100"><path d="M5.80 15.70A14.2 14.2 0 0 1 33.84 12.51"/><path d="M6.93 21.25A14.2 14.2 0 0 0 9.45 25.20M12.06 27.47A14.2 14.2 0 0 0 18.02 29.76"/><path stroke-width="2.700" d="M20.800 6.300V14.400L25.300 18.300"/></g><path fill="#5f6368" d="M0 12.700H12.200L6.100 21.300z"/><circle cx="31" cy="22" r="4.500" fill="#5f6368"/><path fill="#5f6368" d="M21.600 35.400v-1.400c0-3.100 6.200-4.900 9.100-4.900s9 1.800 9 4.900v1.400z"/></svg>
<svg style="left:1102.3px;top:1334.3px" width="34.9" height="17.7" viewBox="2.000 7.000 20.000 10.000" preserveAspectRatio="none"><path fill="#5f6368" d="M3.9 12c0-1.71 1.39-3.1 3.1-3.1h4V7H7c-2.76 0-5 2.24-5 5s2.240 5 5 5h4v-1.900H7c-1.710 0-3.100-1.390-3.100-3.100zM8 13h8v-2H8v2zm9-6h-4v1.900h4c1.710 0 3.100 1.390 3.100 3.100s-1.390 3.100-3.100 3.100h-4V17h4c2.760 0 5-2.240 5-5s-2.240-5-5-5z"/></svg>
<svg style="left:1102.3px;top:1396.1px" width="35.3" height="35.2" viewBox="2.000 2.000 20.000 20.000" preserveAspectRatio="none"><path fill="#5f6368" transform="translate(24.000 0) scale(-1 1)" d="M22 4c0-1.100-.9-2-2-2H4c-1.100 0-2 .9-2 2v12c0 1.100.9 2 2 2h14l4 4V4zm-2 13.170L18.830 16H4V4h16v13.170zM13 5h-2v4H7v2h4v4h2v-4h4V9h-4z"/></svg>
<div class="menubox" id="menu2" style="left:1778px;top:633px;width:576px;height:809px">
<div class="mi hl" style="top:544.8px;height:71px"></div>
<div class="msep" style="top:385px;left:2px;width:572px"></div>
<div class="msep" style="top:633px;left:2px;width:572px"></div>
</div>
<div class="t " id="si0" style="left:1816.2px;top:665.8px;font-size:30.8px;letter-spacing:0.26px;color:#202124;">Values only</div>
<div class="t sc" id="si0s" style="left:2146.7px;top:665.8px;font-size:30.8px;letter-spacing:0.46px;">Ctrl+Shift+V</div>
<div class="t " id="si1" style="left:1814.9px;top:735.8px;font-size:30.8px;letter-spacing:0.37px;color:#202124;">Format only</div>
<div class="t sc" id="si1s" style="left:2173.6px;top:735.8px;font-size:30.8px;letter-spacing:0.47px;">Ctrl+Alt+V</div>
<div class="t " id="si2" style="left:1814.9px;top:806.3px;font-size:30.8px;letter-spacing:0.33px;color:#202124;">Formula only</div>
<div class="t " id="si3" style="left:1815.2px;top:876.8px;font-size:30.8px;letter-spacing:0.68px;color:#202124;">Conditional formatting only</div>
<div class="t " id="si4" style="left:1814.9px;top:947.3px;font-size:30.8px;letter-spacing:0.39px;color:#202124;">Data validation only</div>
<div class="t " id="si5" style="left:1816.3px;top:1054.8px;font-size:30.8px;letter-spacing:0.37px;color:#202124;">As text</div>
<div class="t " id="si6" style="left:1815.3px;top:1125.3px;font-size:30.8px;letter-spacing:0.14px;color:#202124;">CSV as columns</div>
<div class="t " id="si7" style="left:1815.3px;top:1195.8px;font-size:30.8px;letter-spacing:0.46px;color:#202124;">Transposed</div>
<div class="t " id="si8" style="left:1815.3px;top:1303.3px;font-size:30.8px;letter-spacing:0.46px;color:#202124;">Column width only</div>
<div class="t " id="si9" style="left:1816.3px;top:1373.8px;font-size:30.8px;letter-spacing:0.40px;color:#202124;">All except borders</div>
<div class="red" style="left:977px;top:376px;width:235px;height:65px"></div>
<div class="red" style="left:1073px;top:632px;width:710px;height:79px"></div>
<div class="red" style="left:1775.5px;top:1176px;width:580px;height:77px"></div>
</body>
</html>
